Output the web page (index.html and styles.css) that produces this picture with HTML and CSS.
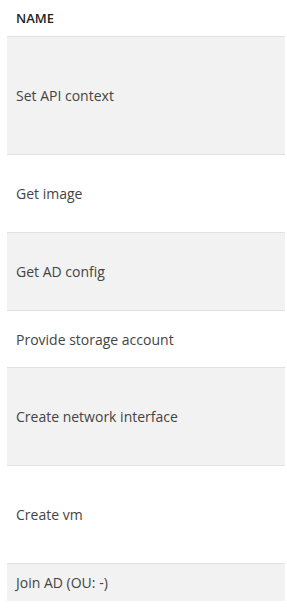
FILE: index.html
```html
<!DOCTYPE html>
<html lang="en">
<head>
  <meta charset="UTF-8">
  <meta name="viewport" content="width=device-width, initial-scale=1.0">
  <title>Steps</title>
  <link rel="stylesheet" href="styles.css">
</head>
<body>
  <div class="steps">
    <div class="steps-head">Name</div>
    <div class="step step-xl">Set API context</div>
    <div class="step step-md">Get image</div>
    <div class="step step-md">Get AD config</div>
    <div class="step step-sm">Provide storage account</div>
    <div class="step step-lg">Create network interface</div>
    <div class="step step-lg">Create vm</div>
    <div class="step step-xs">Join AD (OU: -)</div>
  </div>
</body>
</html>
```

FILE: styles.css
```css
body {
  font-family: 'Open Sans', sans-serif;
  background-color: white;
  margin: 0;
  padding: 0;
}
.steps {
  margin-left: 7px;
  width: 278px;
}
.steps-head {
  box-sizing: border-box;
  height: 37px;
  padding-left: 9px;
  display: flex;
  align-items: center;
  font-size: 13px;
  font-weight: 600;
  text-transform: uppercase;
  color: #252423;
  border-bottom: 1px solid #e1e1e1;
}
.step {
  box-sizing: border-box;
  padding-left: 9px;
  display: flex;
  align-items: center;
  font-size: 14px;
  color: #444;
  border-bottom: 1px solid #e1e1e1;
}
.step:nth-child(even) {
  background-color: #f2f2f2;
}
.step:last-child {
  border-bottom: none;
}
.step-xs { height: 37px; }
.step-sm { height: 57px; }
.step-md { height: 78px; }
.step-lg { height: 98px; }
.step-xl { height: 118px; }
```
